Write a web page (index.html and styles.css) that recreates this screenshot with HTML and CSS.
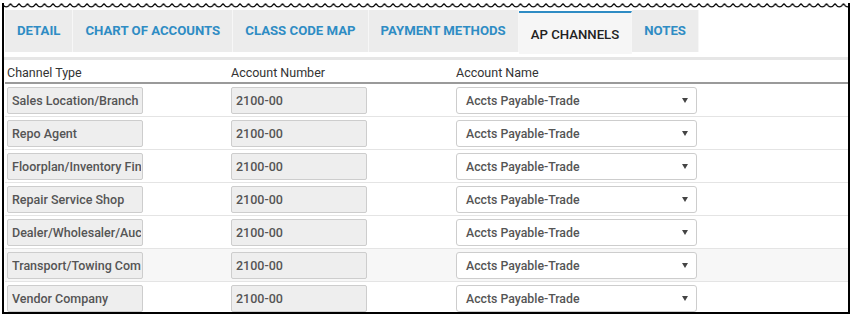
FILE: index.html
```html
<!DOCTYPE html>
<html lang="en">
<head>
    <meta charset="UTF-8">
    <title>AP Channels</title>
    <link rel="stylesheet" href="styles.css">
</head>
<body>
    <div class="frame">
        <svg class="tear" width="848" height="7" viewBox="0 0 848 7">
            <defs>
                <pattern id="wave" width="8.5" height="7" patternUnits="userSpaceOnUse">
                    <path d="M0 0.6 Q4.25 7.2 8.5 0.6" fill="none" stroke="#000" stroke-width="1.2"/>
                </pattern>
            </defs>
            <rect width="848" height="7" fill="url(#wave)"/>
        </svg>
        <ul class="tabs">
            <li>Detail</li>
            <li>Chart of Accounts</li>
            <li>Class Code Map</li>
            <li>Payment Methods</li>
            <li class="active">AP Channels</li>
            <li>Notes</li>
        </ul>
        <table class="grid">
            <thead>
                <tr>
                    <th class="c1">Channel Type</th>
                    <th class="c2">Account Number</th>
                    <th>Account Name</th>
                </tr>
            </thead>
            <tbody>
                <tr>
                    <td><input class="field" readonly value="Sales Location/Branch"></td>
                    <td><input class="field" readonly value="2100-00"></td>
                    <td><div class="select"><span>Accts Payable-Trade</span><i class="caret"></i></div></td>
                </tr>
                <tr>
                    <td><input class="field" readonly value="Repo Agent"></td>
                    <td><input class="field" readonly value="2100-00"></td>
                    <td><div class="select"><span>Accts Payable-Trade</span><i class="caret"></i></div></td>
                </tr>
                <tr>
                    <td><input class="field" readonly value="Floorplan/Inventory Finance"></td>
                    <td><input class="field" readonly value="2100-00"></td>
                    <td><div class="select"><span>Accts Payable-Trade</span><i class="caret"></i></div></td>
                </tr>
                <tr>
                    <td><input class="field" readonly value="Repair Service Shop"></td>
                    <td><input class="field" readonly value="2100-00"></td>
                    <td><div class="select"><span>Accts Payable-Trade</span><i class="caret"></i></div></td>
                </tr>
                <tr>
                    <td><input class="field" readonly value="Dealer/Wholesaler/Auction"></td>
                    <td><input class="field" readonly value="2100-00"></td>
                    <td><div class="select"><span>Accts Payable-Trade</span><i class="caret"></i></div></td>
                </tr>
                <tr class="hover">
                    <td><input class="field" readonly value="Transport/Towing Company"></td>
                    <td><input class="field" readonly value="2100-00"></td>
                    <td><div class="select"><span>Accts Payable-Trade</span><i class="caret"></i></div></td>
                </tr>
                <tr>
                    <td><input class="field" readonly value="Vendor Company"></td>
                    <td><input class="field" readonly value="2100-00"></td>
                    <td><div class="select"><span>Accts Payable-Trade</span><i class="caret"></i></div></td>
                </tr>
            </tbody>
        </table>
    </div>
</body>
</html>
```

FILE: styles.css
```css
body{
    margin: 0;
    background-color: white;
    font-family: Roboto, 'Liberation Sans', sans-serif;
    color: #333;
    overflow: hidden;
}
.frame{
    box-sizing: border-box;
    width: 848px;
    height: 311px;
    margin: 3px 0 0 2px;
    border-left: 2px solid black;
    border-right: 2px solid black;
    border-bottom: 2px solid black;
    overflow: hidden;
}
.tear{
    display: block;
    margin: 0 -2px;
    overflow: visible;
}
.tabs{
    display: flex;
    align-items: flex-start;
    list-style: none;
    margin: 0;
    padding: 0 0 3px 1px;
    border-bottom: 3px solid #e6e6e6;
}
.tabs li{
    height: 42px;
    line-height: 41px;
    padding: 0 12px;
    background-color: #ececec;
    border-right: 1px solid #f7f7f7;
    color: #2f8cc4;
    font-size: 13.2px;
    font-weight: bold;
    text-transform: uppercase;
}
.tabs li.active{
    height: 41px;
    margin-top: 1px;
    line-height: 43px;
    padding: 0 12px;
    background-color: #f6f6f6;
    border-top: 2px solid #2f8cc4;
    color: #222;
    font-weight: 500;
}
.grid{
    border-collapse: collapse;
    margin-left: 1px;
    width: 843px;
}
.grid th{
    height: 20px;
    padding: 2px 2px 0;
    text-align: left;
    font-size: 12.5px;
    font-weight: normal;
    color: #333;
    border-bottom: 2px solid #9a9a9a;
}
.grid .c1{
    width: 220px;
}
.grid .c2{
    width: 221px;
}
.grid td{
    padding: 3px 2px 2px;
    border-bottom: 1px solid #e4e4e4;
}
.grid tr.hover td{
    background-color: #f7f7f7;
}
.field{
    display: block;
    box-sizing: border-box;
    width: 136px;
    height: 27px;
    padding: 0 1px 0 4px;
    margin: 0;
    background-color: #eeeeee;
    border: 1px solid #cdcdcd;
    border-radius: 2px;
    font-family: Roboto, 'Liberation Sans', sans-serif;
    font-size: 12.5px;
    font-weight: 500;
    color: #555;
    outline: none;
}
.select{
    display: flex;
    align-items: center;
    justify-content: space-between;
    box-sizing: border-box;
    width: 241px;
    height: 27px;
    padding: 0 8px 0 9px;
    background-color: white;
    border: 1px solid #cdcdcd;
    border-radius: 3px;
    font-size: 12.3px;
    font-weight: 500;
    color: #555;
}
.caret{
    width: 0;
    height: 0;
    border-left: 3px solid transparent;
    border-right: 3px solid transparent;
    border-top: 5px solid #444;
}
```
